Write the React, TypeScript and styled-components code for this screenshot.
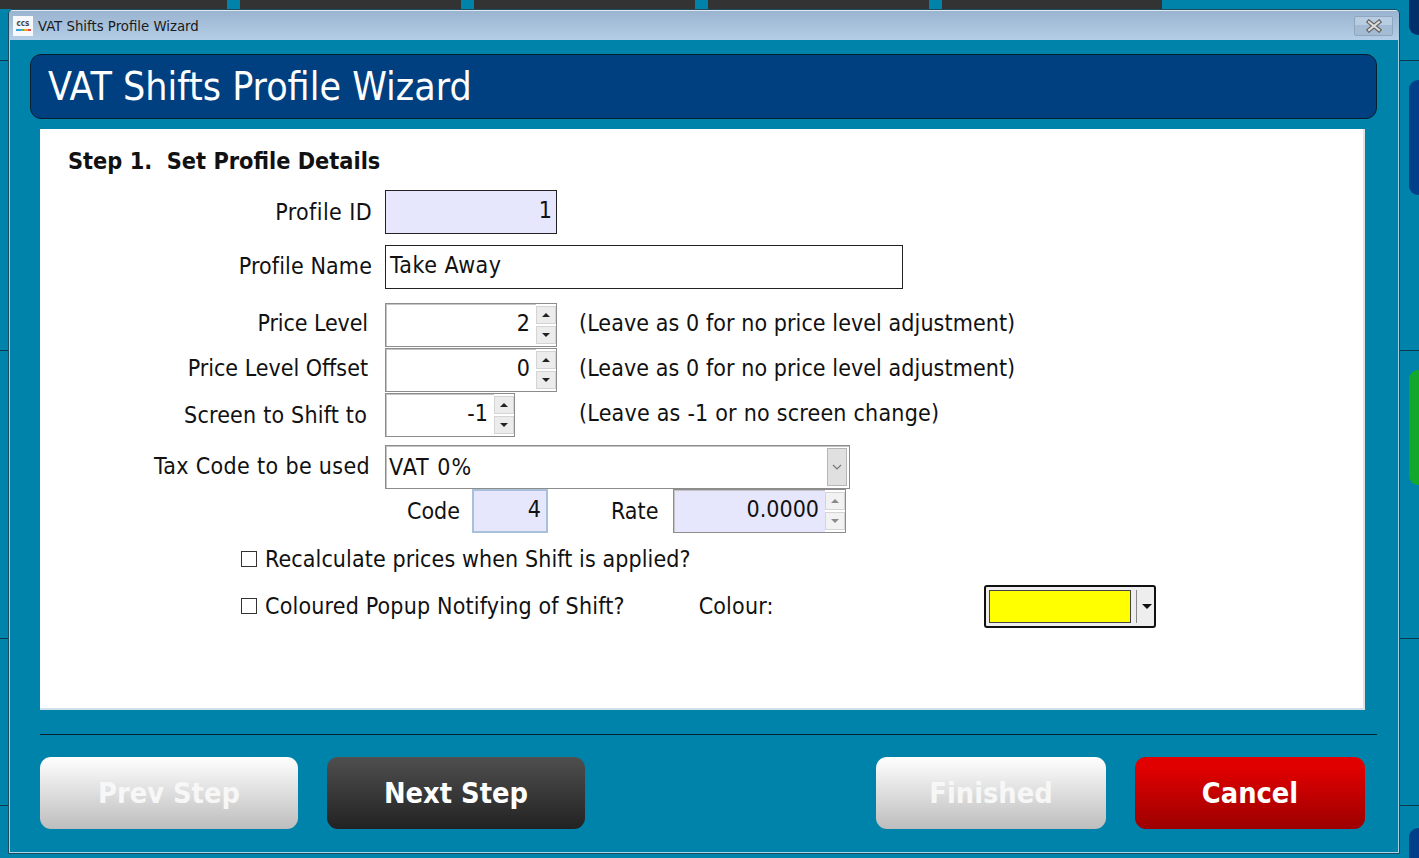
import React from "react";
import styled, { createGlobalStyle } from "styled-components";

const GlobalStyle = createGlobalStyle`
  html, body {
    margin: 0;
    padding: 0;
    width: 1419px;
    height: 858px;
    overflow: hidden;
    background: #0083ab;
    font-family: "DejaVu Sans Condensed", "DejaVu Sans", sans-serif;
    font-stretch: condensed;
    color: #111;
  }
`;

const Desktop = styled.div`
  position: relative;
  width: 1419px;
  height: 858px;
  overflow: hidden;
  background: #0083ab;
`;

const TabStrip = styled.div`
  display: flex;
  gap: 13px;
  width: 1162px;
  height: 9px;
`;

const TabStub = styled.div<{ $w: number }>`
  width: ${(p) => p.$w}px;
  background: #333;
`;

const GridLine = styled.div<{ $y: number }>`
  position: absolute;
  left: 0;
  right: 0;
  top: ${(p) => p.$y}px;
  height: 1px;
  background: #063a4c;
`;

const SideTile = styled.div<{ $y: number; $h: number; $c: string }>`
  position: absolute;
  left: 1409px;
  top: ${(p) => p.$y}px;
  width: 20px;
  height: ${(p) => p.$h}px;
  border-radius: 9px;
  background: ${(p) => p.$c};
`;

const Window = styled.div`
  position: absolute;
  left: 8px;
  top: 9px;
  width: 1392px;
  height: 845px;
  box-sizing: border-box;
  display: flex;
  flex-direction: column;
  border: 1px solid #1d4a5c;
  border-radius: 5px 5px 0 0;
  background: #0083ab;
  overflow: hidden;
  &::after {
    content: "";
    position: absolute;
    inset: 30px 0 0 0;
    border: 1px solid #a9d3e6;
    border-top: 0;
    pointer-events: none;
  }
`;

const TitleBar = styled.div`
  flex: none;
  height: 30px;
  display: flex;
  align-items: center;
  padding: 0 6px 0 4px;
  background: linear-gradient(#9ab3cf, #b5cee7);
  border-top: 1px solid #dfe9f2;
  box-sizing: border-box;
  font-size: 14.8px;
  color: #1a1a1a;
`;

const AppIcon = styled.div`
  width: 20px;
  height: 20px;
  margin-right: 5px;
  background: #f6f8fb;
  display: flex;
  flex-direction: column;
  align-items: center;
  justify-content: center;
  font-size: 8px;
  line-height: 6px;
  font-weight: bold;
  color: #444;
`;

const AppIconBar = styled.div`
  width: 15px;
  height: 2px;
  margin-top: 2px;
  background: linear-gradient(90deg, #3a9bdc 0 33%, #5cb85c 33% 55%, #f0a030 55% 78%, #e04a4a 78%);
`;

const CloseButton = styled.div`
  margin-left: auto;
  width: 39px;
  height: 20px;
  box-sizing: border-box;
  display: flex;
  align-items: center;
  justify-content: center;
  border: 1px solid #8fa6bf;
  border-radius: 2px;
  background: linear-gradient(#b9cde2 0 45%, #a4bbd4 45% 100%);
`;

const Content = styled.div`
  flex: 1;
  display: flex;
  flex-direction: column;
  padding: 14px 22px 0 21px;
`;

const Banner = styled.div`
  height: 65px;
  box-sizing: border-box;
  display: flex;
  align-items: center;
  padding: 0 0 0 17px;
  border: 1px solid #04202f;
  border-radius: 11px;
  background: #004080;
  color: #fff;
  font-size: 39px;
  margin-bottom: 10px;
`;

const Panel = styled.div`
  height: 581px;
  width: 1325px;
  margin-left: 10px;
  box-sizing: border-box;
  padding-top: 18px;
  background: #fff;
  border-right: 2px solid #dfe3e6;
  border-bottom: 2px solid #cfe0e8;
  display: flex;
  flex-direction: column;
`;

const StepTitle = styled.div`
  padding-left: 28px;
  font-size: 23.3px;
  font-weight: bold;
  line-height: 27px;
  height: 27px;
  margin-bottom: 16px;
  color: #111;
  white-space: pre;
`;

const Row = styled.div<{ $top?: number }>`
  display: flex;
  align-items: center;
  margin-top: ${(p) => p.$top ?? 0}px;
`;

const FieldLabel = styled.div<{ $pad: number; $track?: number; $lift?: number }>`
  width: 345px;
  box-sizing: border-box;
  padding-right: ${(p) => p.$pad}px;
  padding-bottom: ${(p) => p.$lift ?? 0}px;
  text-align: right;
  font-size: 23px;
  letter-spacing: ${(p) => p.$track ?? 0}px;
  white-space: nowrap;
`;

const Plain = styled.div<{ $w: number; $left?: number }>`
  width: ${(p) => p.$w}px;
  margin-left: ${(p) => p.$left ?? 0}px;
  font-size: 23px;
  white-space: nowrap;
`;

const Hint = styled.div<{ $left: number; $track: number }>`
  margin-left: ${(p) => p.$left}px;
  padding-bottom: 4px;
  font-size: 23px;
  letter-spacing: ${(p) => p.$track}px;
  white-space: nowrap;
`;

const Field = styled.div<{ $w: number; $tint?: boolean; $blue?: boolean; $left?: boolean; $track?: number }>`
  width: ${(p) => p.$w}px;
  height: 44px;
  box-sizing: border-box;
  display: flex;
  align-items: center;
  justify-content: ${(p) => (p.$left ? "flex-start" : "flex-end")};
  padding: 0 ${(p) => (p.$blue ? 5 : 4)}px 5px 4px;
  border: ${(p) => (p.$blue ? "2px solid #a9c0da" : "1px solid #222")};
  background: ${(p) => (p.$tint ? "#e6e6fc" : "#fff")};
  font-size: 23px;
  letter-spacing: ${(p) => p.$track ?? 0}px;
`;

const SpinField = styled.div<{ $w: number; $tint?: boolean }>`
  width: ${(p) => p.$w}px;
  height: 44px;
  box-sizing: border-box;
  display: flex;
  align-items: stretch;
  border: 1px solid #8c8c8c;
  box-shadow: inset 1px 1px 0 #c4c4c4;
  background: ${(p) => (p.$tint ? "#e6e6fc" : "#fff")};
  font-size: 23px;
`;

const SpinValue = styled.div`
  flex: 1;
  display: flex;
  align-items: center;
  justify-content: flex-end;
  padding: 0 6px 5px 0;
`;

const SpinButtons = styled.div`
  width: 20px;
  display: flex;
  flex-direction: column;
  gap: 2px;
  padding: 2px 0;
  background: #fff;
`;

const SpinArrow = styled.div<{ $down?: boolean; $light?: boolean }>`
  flex: 1;
  display: flex;
  align-items: center;
  justify-content: center;
  border: 1px solid #d4d4d4;
  background: ${(p) => (p.$light ? "#f2f2f2" : "#ececec")};
  &::after {
    content: "";
    border-left: 4px solid transparent;
    border-right: 4px solid transparent;
    ${(p) => (p.$down ? "border-top" : "border-bottom")}: 4px solid ${(p) => (p.$light ? "#8a8a8a" : "#222")};
  }
`;

const Combo = styled.div`
  width: 465px;
  height: 44px;
  box-sizing: border-box;
  display: flex;
  align-items: center;
  border: 1px solid #8c8c8c;
  box-shadow: inset 1px 1px 0 #c4c4c4;
  background: #fff;
  font-size: 23px;
  padding: 0 2px 0 3px;
`;

const ComboValue = styled.div`
  flex: 1;
  letter-spacing: 1px;
`;

const ComboButton = styled.div`
  width: 20px;
  height: 38px;
  display: flex;
  align-items: center;
  justify-content: center;
  border: 1px solid #b5b5b5;
  background: #e0e0e0;
  box-sizing: border-box;
`;

const CheckRow = styled.div<{ $top: number; $track: number }>`
  display: flex;
  align-items: center;
  height: 28px;
  margin-top: ${(p) => p.$top}px;
  padding-left: 201px;
  font-size: 23px;
  letter-spacing: ${(p) => p.$track}px;
  white-space: nowrap;
`;

const CheckBox = styled.div`
  width: 16px;
  height: 16px;
  box-sizing: border-box;
  border: 1px solid #333;
  background: #fff;
  margin-right: 8px;
`;

const ColourLabel = styled.div`
  margin-left: 74px;
  width: 285px;
`;

const ColourPicker = styled.div`
  width: 172px;
  height: 43px;
  box-sizing: border-box;
  display: flex;
  align-items: center;
  padding: 3px 0 3px 3px;
  border: 2px solid #111;
  border-radius: 3px;
  background: #eee;
`;

const Swatch = styled.div`
  width: 142px;
  height: 33px;
  box-sizing: border-box;
  border: 1px solid #444;
  background: #ffff00;
`;

const SwatchSplit = styled.div`
  width: 1px;
  height: 33px;
  margin-left: 5px;
  background: #888;
`;

const SwatchArrow = styled.div`
  margin-left: 5px;
  border-left: 5px solid transparent;
  border-right: 5px solid transparent;
  border-top: 5px solid #111;
`;

const Divider = styled.div`
  height: 1px;
  margin: 24px 0 22px 10px;
  background: #06202c;
`;

const ButtonBar = styled.div`
  display: flex;
  padding-left: 10px;
`;

const tones = {
  off: "linear-gradient(#fff, #bdbdbd)",
  dark: "linear-gradient(#4f4f4f, #222)",
  red: "linear-gradient(#e00000 15%, #9c0000)",
};

const WizardButton = styled.div<{ $w: number; $tone: keyof typeof tones; $left?: number }>`
  width: ${(p) => p.$w}px;
  height: 72px;
  margin-left: ${(p) => p.$left ?? 0}px;
  display: flex;
  align-items: center;
  justify-content: center;
  border-radius: 11px;
  background: ${(p) => tones[p.$tone]};
  color: ${(p) => (p.$tone === "off" ? "#f7f7f7" : "#fff")};
  font-size: 28.7px;
  font-weight: bold;
  padding-bottom: 1px;
  box-sizing: border-box;
`;

function Spin({ value, w, tint, light }: { value: string; w: number; tint?: boolean; light?: boolean }) {
  return (
    <SpinField $w={w} $tint={tint}>
      <SpinValue>{value}</SpinValue>
      <SpinButtons>
        <SpinArrow $light={light} />
        <SpinArrow $down $light={light} />
      </SpinButtons>
    </SpinField>
  );
}

export default function App() {
  return (
    <Desktop>
      <GlobalStyle />
      <TabStrip>
        <TabStub $w={227} />
        <TabStub $w={221} />
        <TabStub $w={221} />
        <TabStub $w={221} />
        <TabStub $w={220} />
      </TabStrip>
      <GridLine $y={60} />
      <GridLine $y={350} />
      <GridLine $y={638} />
      <GridLine $y={805} />
      <SideTile $y={-20} $h={55} $c="#00306c" />
      <SideTile $y={80} $h={115} $c="#00408a" />
      <SideTile $y={370} $h={115} $c="#12a82c" />
      <SideTile $y={828} $h={60} $c="#00408a" />
      <Window>
        <TitleBar>
          <AppIcon>
            ccs
            <AppIconBar />
          </AppIcon>
          VAT Shifts Profile Wizard
          <CloseButton>
            <svg width="18" height="14" viewBox="0 0 18 14">
              <path d="M4 3 L14 11 M14 3 L4 11" stroke="#666" strokeWidth="4.5" strokeLinecap="square" />
              <path d="M4 3 L14 11 M14 3 L4 11" stroke="#dcdcdc" strokeWidth="2" strokeLinecap="square" />
            </svg>
          </CloseButton>
        </TitleBar>
        <Content>
          <Banner>VAT Shifts Profile Wizard</Banner>
          <Panel>
            <StepTitle>Step 1.  Set Profile Details</StepTitle>
            <Row>
              <FieldLabel $pad={13} $track={0.4}>Profile ID</FieldLabel>
              <Field $w={172} $tint>1</Field>
            </Row>
            <Row $top={11}>
              <FieldLabel $pad={13} $track={0.12} $lift={3}>Profile Name</FieldLabel>
              <Field $w={518} $left $track={0.5}>Take Away</Field>
            </Row>
            <Row $top={14}>
              <FieldLabel $pad={17} $track={-0.1} $lift={4}>Price Level</FieldLabel>
              <Spin value="2" w={172} />
              <Hint $left={22} $track={0.08}>(Leave as 0 for no price level adjustment)</Hint>
            </Row>
            <Row $top={1}>
              <FieldLabel $pad={17} $lift={4}>Price Level Offset</FieldLabel>
              <Spin value="0" w={172} />
              <Hint $left={22} $track={0.08}>(Leave as 0 for no price level adjustment)</Hint>
            </Row>
            <Row $top={1}>
              <FieldLabel $pad={18} $track={0.2}>Screen to Shift to</FieldLabel>
              <Spin value="-1" w={130} />
              <Hint $left={64} $track={0.22}>(Leave as -1 or no screen change)</Hint>
            </Row>
            <Row $top={8}>
              <FieldLabel $pad={15} $track={0.34} $lift={2}>Tax Code to be used</FieldLabel>
              <Combo>
                <ComboValue>VAT 0%</ComboValue>
                <ComboButton>
                  <svg width="12" height="8" viewBox="0 0 12 8">
                    <path d="M2 2 L6 6 L10 2" fill="none" stroke="#777" strokeWidth="1.2" />
                  </svg>
                </ComboButton>
              </Combo>
            </Row>
            <Row>
              <Plain $w={65} $left={367}>Code</Plain>
              <Field $w={76} $tint $blue>4</Field>
              <Plain $w={62} $left={63}>Rate</Plain>
              <Spin value="0.0000" w={173} tint light />
            </Row>
            <CheckRow $top={12} $track={0.1}>
              <CheckBox />
              Recalculate prices when Shift is applied?
            </CheckRow>
            <CheckRow $top={19} $track={0.18}>
              <CheckBox />
              Coloured Popup Notifying of Shift?
              <ColourLabel>Colour:</ColourLabel>
              <ColourPicker>
                <Swatch />
                <SwatchSplit />
                <SwatchArrow />
              </ColourPicker>
            </CheckRow>
          </Panel>
          <Divider />
          <ButtonBar>
            <WizardButton $w={258} $tone="off">Prev Step</WizardButton>
            <WizardButton $w={258} $tone="dark" $left={29}>Next Step</WizardButton>
            <WizardButton $w={230} $tone="off" $left={291}>Finished</WizardButton>
            <WizardButton $w={230} $tone="red" $left={29}>Cancel</WizardButton>
          </ButtonBar>
        </Content>
      </Window>
    </Desktop>
  );
}
